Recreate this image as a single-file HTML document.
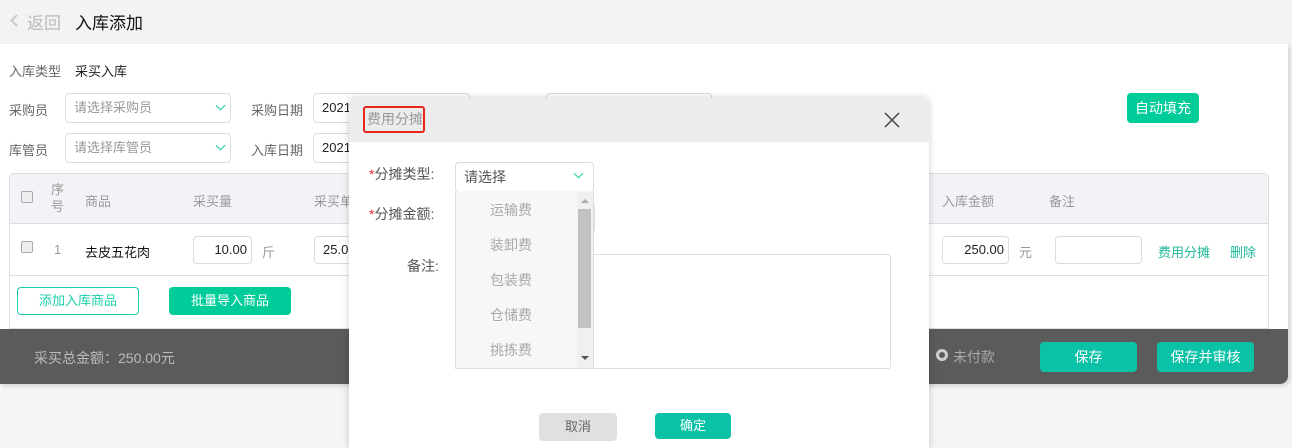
<!DOCTYPE html>
<html><head><meta charset="utf-8"><style>
*{box-sizing:border-box;margin:0;padding:0}
body{width:1292px;height:446px;overflow:hidden;background:#f5f5f6;font-family:"Liberation Sans","Noto Sans CJK SC",sans-serif;font-size:13px;color:#333;position:relative}
.abs{position:absolute;white-space:nowrap}
.inp{position:absolute;border:1px solid #dcdcdc;border-radius:4px;background:#fff;height:30px;line-height:28px;padding-left:8px;color:#999;font-size:13px}
.lbl{position:absolute;color:#666;font-size:13px;white-space:nowrap}
.chev{position:absolute;width:7px;height:7px;border-right:1.5px solid #1ccfa9;border-bottom:1.5px solid #1ccfa9;transform:rotate(45deg)}
.btn{position:absolute;border-radius:4px;color:#fff;text-align:center;font-size:13px;white-space:nowrap}
</style></head><body>
<div class="abs" style="left:0;top:0;width:1292px;height:44px;background:#f3f3f4"></div>
<div class="abs" style="left:12px;top:16px;width:9px;height:9px;border-left:2px solid #ccc;border-bottom:2px solid #ccc;transform:rotate(45deg)"></div>
<div class="abs" style="left:27px;top:9px;font-size:17px;color:#bbb">返回</div>
<div class="abs" style="left:75px;top:9px;font-size:17px;color:#111">入库添加</div>
<div class="abs" style="left:0;top:44px;width:1288px;height:340px;background:#fff;box-shadow:2px 2px 4px rgba(0,0,0,.15);border-bottom-right-radius:8px"></div>
<div class="lbl" style="left:9px;top:61px">入库类型</div>
<div class="abs" style="left:75px;top:61px;color:#222">采买入库</div>
<div class="lbl" style="left:9px;top:100px">采购员</div>
<div class="inp" style="left:65px;top:93px;width:166px">请选择采购员</div><div class="chev" style="left:217px;top:102px"></div>
<div class="lbl" style="left:251px;top:100px">采购日期</div>
<div class="inp" style="left:313px;top:93px;width:157px;color:#222">2021</div>
<div class="inp" style="left:546px;top:93px;width:166px"></div>
<div class="lbl" style="left:9px;top:140px">库管员</div>
<div class="inp" style="left:65px;top:133px;width:166px">请选择库管员</div><div class="chev" style="left:217px;top:142px"></div>
<div class="lbl" style="left:251px;top:140px">入库日期</div>
<div class="inp" style="left:313px;top:133px;width:157px;color:#222">2021</div>
<div class="btn" style="left:1127px;top:93px;width:72px;height:30px;line-height:30px;background:#00cc99;font-size:14px">自动填充</div>
<div class="abs" style="left:9px;top:173px;width:1260px;height:156px;border:1px solid #ddd;border-radius:5px 5px 0 0"></div>
<div class="abs" style="left:10px;top:174px;width:1258px;height:50px;background:#f2f3f7;border-bottom:1px solid #ddd;border-radius:5px 5px 0 0"></div>
<div class="abs" style="left:10px;top:275px;width:1258px;height:1px;background:#ddd"></div>
<div class="abs" style="left:21px;top:191px;width:12px;height:12px;border:1px solid #aaa;border-radius:2px;background:#eee"></div>
<div class="abs" style="left:21px;top:241px;width:12px;height:12px;border:1px solid #aaa;border-radius:2px;background:#eee"></div>
<div class="lbl" style="left:51px;top:181px;line-height:17px;color:#999">序<br>号</div>
<div class="lbl" style="left:85px;top:191px;color:#999">商品</div>
<div class="lbl" style="left:193px;top:191px;color:#999">采买量</div>
<div class="lbl" style="left:314px;top:191px;color:#999">采买单</div>
<div class="lbl" style="left:942px;top:191px;color:#999">入库金额</div>
<div class="lbl" style="left:1049px;top:191px;color:#999">备注</div>
<div class="lbl" style="left:54px;top:242px;color:#999">1</div>
<div class="abs" style="left:85px;top:242px;color:#111">去皮五花肉</div>
<div class="inp" style="left:193px;top:236px;width:59px;height:28px;line-height:26px;color:#222;text-align:right;padding-right:4px">10.00</div>
<div class="lbl" style="left:262px;top:242px;color:#999">斤</div>
<div class="inp" style="left:314px;top:236px;width:50px;height:28px;line-height:26px;color:#222">25.0</div>
<div class="inp" style="left:942px;top:236px;width:67px;height:28px;line-height:26px;color:#222;text-align:right;padding-right:4px">250.00</div>
<div class="lbl" style="left:1019px;top:242px;color:#999">元</div>
<div class="inp" style="left:1055px;top:236px;width:87px;height:28px"></div>
<div class="abs" style="left:1158px;top:242px;color:#1bb89a">费用分摊</div>
<div class="abs" style="left:1230px;top:242px;color:#1bb89a">删除</div>
<div class="abs" style="left:17px;top:287px;width:122px;height:28px;border:1px solid #1ccfa9;border-radius:4px;color:#1ccfa9;text-align:center;line-height:26px">添加入库商品</div>
<div class="btn" style="left:169px;top:287px;width:122px;height:28px;line-height:28px;background:#00cc99">批量导入商品</div>
<div class="abs" style="left:0;top:329px;width:1288px;height:55px;background:#5b5b5b;border-bottom-right-radius:8px"></div>
<div class="abs" style="left:34px;top:348px;color:#bbb;font-size:14px">采买总金额：250.00元</div>
<div class="abs" style="left:936px;top:349px;width:12px;height:12px;border-radius:50%;border:3px solid #ccc;background:#5b5b5b"></div>
<div class="abs" style="left:953px;top:347px;color:#aaa;font-size:14px">未付款</div>
<div class="btn" style="left:1040px;top:342px;width:97px;height:30px;line-height:30px;background:#0cc2a6;font-size:14px">保存</div>
<div class="btn" style="left:1157px;top:342px;width:97px;height:30px;line-height:30px;background:#0cc2a6;font-size:14px">保存并审核</div>

<div class="abs" style="left:349px;top:98px;width:580px;height:350px;background:#fff;border-radius:6px 6px 0 0;box-shadow:0 0 8px rgba(0,0,0,.2)"></div>
<div class="abs" style="left:349px;top:98px;width:580px;height:44px;background:#ececec;border-radius:6px 6px 0 0"></div>
<div class="abs" style="left:363px;top:106px;width:62px;height:27px;border:2px solid #e8261d;border-radius:3px;color:#999;font-size:14px;line-height:23px;padding-left:2px;overflow:hidden">费用分摊</div>
<svg class="abs" style="left:883px;top:111px" width="18" height="18"><path d="M2 2L16 16M16 2L2 16" stroke="#555" stroke-width="1.6"/></svg>
<div class="abs" style="left:369px;top:164px;color:#555;font-size:14px"><span style="color:#e33">*</span>分摊类型:</div>
<div class="abs" style="left:369px;top:204px;color:#555;font-size:14px"><span style="color:#e33">*</span>分摊金额:</div>
<div class="abs" style="left:407px;top:256px;color:#555;font-size:14px">备注:</div>
<div class="inp" style="left:455px;top:203px;width:140px;height:30px"></div>
<div class="abs" style="left:455px;top:254px;width:436px;height:115px;border:1px solid #ddd;border-radius:3px;background:#fff"></div>
<div class="inp" style="left:455px;top:162px;width:139px;height:30px;color:#555;font-size:14px">请选择</div><div class="chev" style="left:575px;top:170px"></div>
<div class="abs" style="left:455px;top:191px;width:139px;height:178px;background:#f7f7f7;border:1px solid #e0e0e0;border-top:none"></div>
<div class="abs" style="left:577px;top:192px;width:16px;height:176px;background:#f0f0f0"></div>
<div class="abs" style="left:578px;top:209px;width:13px;height:119px;background:#c1c1c1"></div>
<div class="abs" style="left:581px;top:199px;border:4px solid transparent;border-bottom:4px solid #aaa;border-top:none"></div>
<div class="abs" style="left:581px;top:356px;border:4px solid transparent;border-top:4px solid #555;border-bottom:none"></div>
<div class="abs" style="left:490px;top:193px;color:#aaa;font-size:14px;line-height:35px">运输费<br>装卸费<br>包装费<br>仓储费<br>挑拣费</div>
<div class="btn" style="left:539px;top:413px;width:78px;height:28px;line-height:28px;background:#e0e0e0;color:#666">取消</div>
<div class="btn" style="left:655px;top:413px;width:76px;height:26px;line-height:26px;background:#0cc2a6">确定</div>
</body></html>
